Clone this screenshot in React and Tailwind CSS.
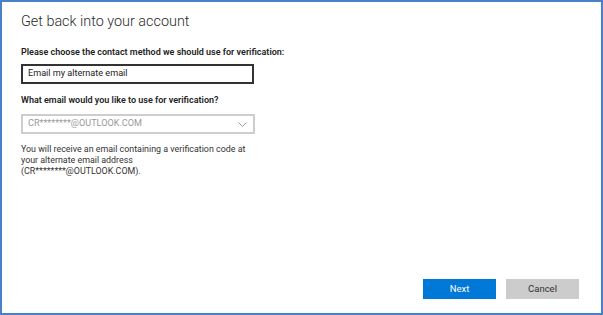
export default function App() {
  return (
    <div className="w-[603px] h-[315px] bg-white border-2 border-[#4a80c8] flex flex-col text-[#222] font-[Roboto,sans-serif]">
      <div className="flex-1 pl-[19px] pt-[10px]">
        <h1 className="text-[14.4px] font-light leading-[20px] text-[#2b2b2b]">
          Get back into your account
        </h1>

        <p className="mt-[14px] text-[9px] font-semibold leading-[12px]">
          Please choose the contact method we should use for verification:
        </p>
        <div className="mt-[6px] w-[233px] h-[20px] border-2 border-[#333] flex items-center pl-[5px] text-[9.1px] leading-none">
          Email my alternate email
        </div>

        <p className="mt-[10px] text-[9px] font-semibold leading-[12px]">
          What email would you like to use for verification?
        </p>
        <div className="mt-[8px] w-[234px] h-[20px] border-2 border-[#cdcdcd] flex items-center justify-between pl-[5px] pr-[6px] text-[9.1px] text-[#999] leading-none">
          <span>CR********@OUTLOOK.COM</span>
          <svg width="9" height="5" viewBox="0 0 9 5" fill="none">
            <path d="M0.5 0.5 L4.5 4.5 L8.5 0.5" stroke="#9a9a9a" strokeWidth="1" />
          </svg>
        </div>

        <p className="mt-[10px] w-[230px] text-[8.9px] leading-[11px] text-[#333]">
          You will receive an email containing a verification code at your alternate email address (CR********@OUTLOOK.COM).
        </p>
      </div>

      <div className="flex justify-end gap-[10px] pr-[22px] pb-[14px]">
        <button className="w-[73px] h-[20px] bg-[#0078d7] text-white text-[9.5px] font-normal leading-none">
          Next
        </button>
        <button className="w-[73px] h-[20px] bg-[#cccccc] text-[#333] text-[9.5px] font-normal leading-none">
          Cancel
        </button>
      </div>
    </div>
  );
}
